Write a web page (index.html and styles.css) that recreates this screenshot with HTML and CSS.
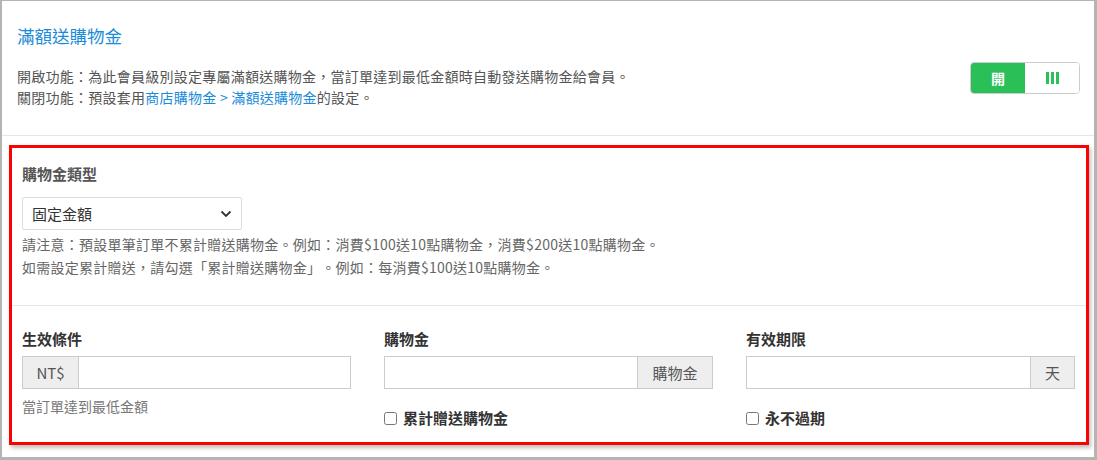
FILE: index.html
```html
<!DOCTYPE html>
<html lang="zh-Hant">
<head>
    <meta charset="UTF-8" />
    <meta name="viewport" content="width=device-width, initial-scale=1.0" />
    <title>滿額送購物金</title>
    <link rel="stylesheet" href="styles.css">
</head>
<body>

<div class="frame">
    <!-- Header: title, description, toggle -->
    <div class="header">
        <div class="title">滿額送購物金</div>
        <div class="desc-row">
            <div class="desc">
                開啟功能：為此會員級別設定專屬滿額送購物金，當訂單達到最低金額時自動發送購物金給會員。<br>
                關閉功能：預設套用<a href="#" class="link">商店購物金 &gt; 滿額送購物金</a>的設定。
            </div>
            <div class="toggle">
                <span class="toggle-on">開</span>
                <span class="toggle-off">
                    <svg width="13" height="12" viewBox="0 0 13 12">
                        <rect x="0" y="0" width="3" height="12" fill="#2bbf57"/>
                        <rect x="5" y="0" width="3" height="12" fill="#2bbf57"/>
                        <rect x="10" y="0" width="3" height="12" fill="#2bbf57"/>
                    </svg>
                </span>
            </div>
        </div>
    </div>

    <div class="highlight">
        <!-- Credit type -->
        <div class="section type-section">
            <div class="label">購物金類型</div>
            <div class="select">
                <span>固定金額</span>
                <svg width="12" height="8" viewBox="0 0 12 8">
                    <path d="M1.5 1.5 L6 6 L10.5 1.5" fill="none" stroke="#333" stroke-width="1.8"/>
                </svg>
            </div>
            <div class="note">
                請注意：預設單筆訂單不累計贈送購物金。例如：消費$100送10點購物金，消費$200送10點購物金。<br>
                如需設定累計贈送，請勾選「累計贈送購物金」。例如：每消費$100送10點購物金。
            </div>
        </div>

        <!-- Conditions -->
        <div class="section fields">
            <div class="field">
                <div class="label dark">生效條件</div>
                <div class="input-group">
                    <span class="addon addon-left">NT$</span>
                    <input type="text" class="input">
                </div>
                <div class="help">當訂單達到最低金額</div>
            </div>
            <div class="field">
                <div class="label dark">購物金</div>
                <div class="input-group">
                    <input type="text" class="input">
                    <span class="addon addon-right wide">購物金</span>
                </div>
                <label class="check"><input type="checkbox"> 累計贈送購物金</label>
            </div>
            <div class="field">
                <div class="label dark">有效期限</div>
                <div class="input-group">
                    <input type="text" class="input">
                    <span class="addon addon-right">天</span>
                </div>
                <label class="check"><input type="checkbox"> 永不過期</label>
            </div>
        </div>
    </div>
</div>

</body>
</html>
```

FILE: styles.css
```css
* {
    box-sizing: border-box;
}
body {
    margin: 0;
    font-family: "Noto Sans CJK TC", Lato, sans-serif;
    color: #333;
    background-color: #fff;
    text-spacing-trim: space-all;
}
.frame {
    height: 460px;
    overflow: hidden;
    border-left: 2px solid #b4b4b4;
    border-top: 1px solid #b4b4b4;
    border-right: 3px solid #b4b4b4;
    border-bottom: 3px solid #b4b4b4;
    background-color: #fff;
}
.header {
    padding: 23px 14px 0 15px;
    height: 135px;
    border-bottom: 1px solid #e6e6e6;
}
.title {
    font-size: 17.5px;
    line-height: 24px;
    color: #1a8bd8;
}
.desc-row {
    display: flex;
    justify-content: space-between;
    align-items: flex-start;
    margin-top: 18px;
}
.desc {
    font-size: 14px;
    line-height: 21px;
    letter-spacing: 0.25px;
    color: #555;
}
.link {
    color: #1a8bd8;
    text-decoration: none;
}
.toggle {
    display: flex;
    width: 110px;
    height: 32px;
    margin-top: -4px;
    border: 1px solid #ccc;
    border-radius: 4px;
    overflow: hidden;
}
.toggle-on, .toggle-off {
    flex: 1;
    display: flex;
    align-items: center;
    justify-content: center;
}
.toggle-on {
    background-color: #2bbf57;
    color: #fff;
    font-weight: bold;
    font-size: 14px;
}
.toggle-off {
    background-color: #fff;
}
.highlight {
    margin: 9px 5px 0 7px;
    border: 3px solid #ff0000;
    box-shadow: 2px 3px 4px rgba(0, 0, 0, 0.25);
}
.section {
    padding-left: 10px;
    padding-right: 11px;
}
.type-section {
    padding-top: 16px;
    padding-bottom: 26px;
    border-bottom: 1px solid #e6e6e6;
}
.label {
    font-size: 15px;
    line-height: 20px;
    font-weight: bold;
    color: #555;
}
.label.dark {
    color: #333;
}
.select {
    display: flex;
    align-items: center;
    justify-content: space-between;
    width: 220px;
    height: 33px;
    margin-top: 13px;
    padding: 0 9px 0 9px;
    border: 1px solid #ddd;
    border-radius: 2px;
    font-size: 15px;
    color: #333;
}
.note {
    margin-top: 3px;
    font-size: 14px;
    line-height: 23px;
    letter-spacing: 0.25px;
    color: #666;
}
.fields {
    display: grid;
    grid-template-columns: 329px 329px 329px;
    gap: 33px;
    padding-top: 23px;
    padding-bottom: 14px;
}
.input-group {
    display: flex;
    height: 33px;
    margin-top: 7px;
}
.input {
    flex: 1;
    min-width: 0;
    height: 33px;
    border: 1px solid #ccc;
    border-radius: 0;
    font-size: 14px;
    padding: 0 8px;
}
.addon {
    display: flex;
    align-items: center;
    justify-content: center;
    width: 44px;
    height: 33px;
    background-color: #eee;
    border: 1px solid #ccc;
    font-size: 15px;
    color: #555;
}
.addon-left {
    width: 56px;
    border-right: none;
}
.addon-right {
    border-left: none;
}
.addon.wide {
    width: 75px;
}
.help {
    margin-top: 7px;
    font-size: 14px;
    line-height: 20px;
    color: #777;
}
.check {
    display: flex;
    align-items: center;
    gap: 6px;
    margin-top: 19px;
    font-size: 15px;
    line-height: 20px;
    font-weight: bold;
    color: #333;
}
.check input {
    width: 13px;
    height: 13px;
    margin: 0;
}
```
